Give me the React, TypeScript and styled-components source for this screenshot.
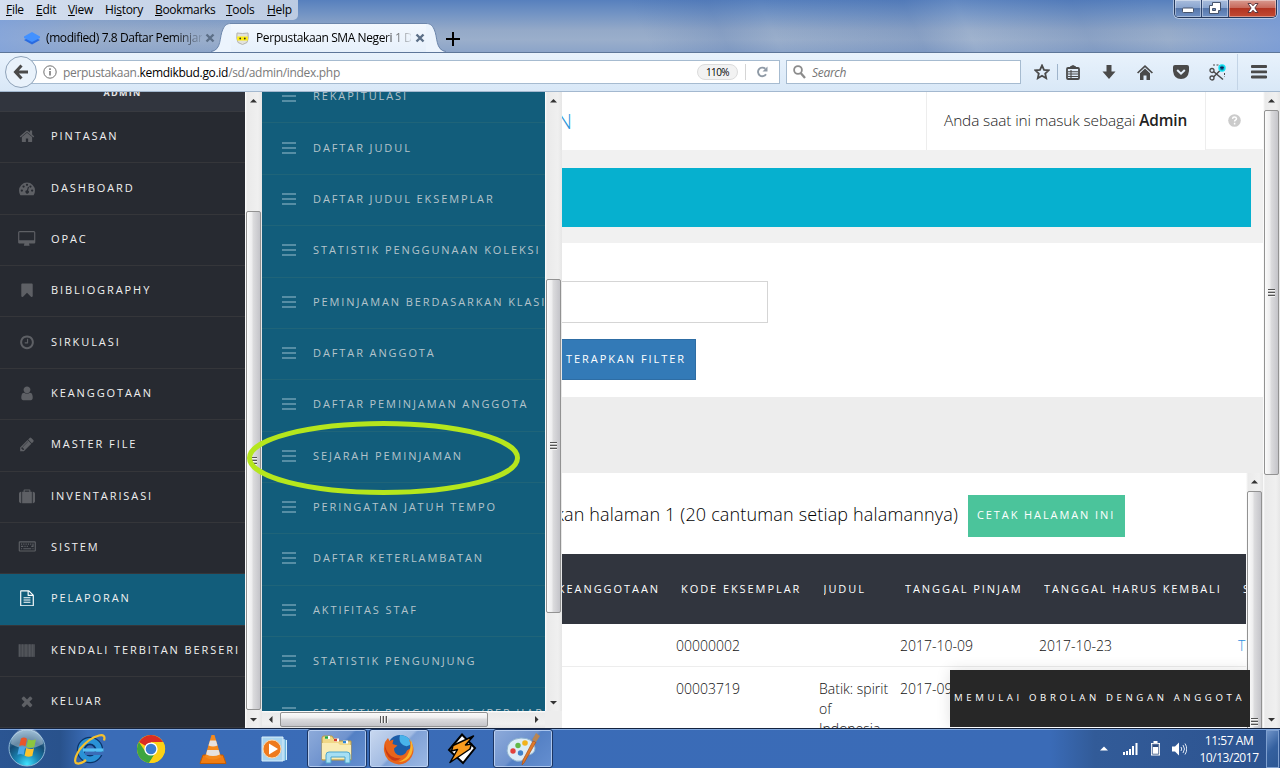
import React from "react";
import styled, { createGlobalStyle, css } from "styled-components";

const Global = createGlobalStyle`
  *, *::before, *::after { box-sizing: border-box; }
  html, body { margin: 0; padding: 0; }
  body { width: 1280px; height: 768px; overflow: hidden; font-family: "Open Sans", "Noto Sans", sans-serif; }
  svg { display: block; flex: none; }
`;

const Screen = styled.div`
  position: relative;
  display: flex;
  flex-direction: column;
  width: 1280px;
  height: 768px;
  overflow: hidden;
  background: #fff;
`;

/* ---------- browser chrome ---------- */

const TitleBar = styled.header`
  display: flex;
  flex-direction: column;
  height: 53px;
  flex: none;
  border-bottom: 1px solid #5d7699;
  background:
    linear-gradient(90deg, rgba(130, 164, 222, 0.75) 0, rgba(150, 172, 206, 0.35) 90px, rgba(255, 255, 255, 0) 240px, rgba(255, 255, 255, 0) 1170px, rgba(120, 155, 216, 0.75) 1280px),
    linear-gradient(65deg, rgba(255, 255, 255, 0) 50%, rgba(50, 90, 160, 0.16) 56%, rgba(255, 255, 255, 0) 60%, rgba(50, 90, 160, 0.16) 71%, rgba(255, 255, 255, 0.06) 75%, rgba(50, 90, 160, 0.14) 84%, rgba(255, 255, 255, 0) 90%),
    linear-gradient(180deg, #5780bd 0, #7394c4 14px, #94a9c8 30px, #9aaecb 40px, #8aa3c8 53px);
`;

const TitleTop = styled.div`
  display: flex;
  justify-content: space-between;
  align-items: flex-start;
  height: 24px;
  padding-right: 3px;
`;

const MenuBar = styled.nav`
  display: flex;
  height: 20px;
  width: 298px;
  padding-left: 6px;
  background: linear-gradient(90deg, #d5dfef, #bccbe2);
  border-bottom-right-radius: 5px;
`;

const MenuItem = styled.span<{ $w: number; $ls?: number }>`
  width: ${(p) => p.$w}px;
  flex: none;
  font-size: 12px;
  line-height: 20px;
  letter-spacing: ${(p) => p.$ls ?? -0.3}px;
  white-space: nowrap;
  color: #000;
  u { text-underline-offset: 1px; }
`;

const WindowButtons = styled.div`
  display: flex;
  width: 103px;
  height: 18px;
  border: 1px solid #24385c;
  border-top: 0;
  border-radius: 0 0 5px 5px;
  overflow: hidden;
  box-shadow: 0 0 0 1px rgba(255, 255, 255, 0.45);
`;

const WindowButton = styled.span<{ $w: number; $close?: boolean }>`
  display: flex;
  justify-content: center;
  align-items: center;
  width: ${(p) => p.$w}px;
  height: 17px;
  padding-bottom: 1px;
  box-shadow: inset 0 0 0 1px rgba(255, 255, 255, 0.4);
  border-right: ${(p) => (p.$close ? 0 : 1)}px solid #2d446e;
  background: ${(p) =>
    p.$close
      ? "linear-gradient(180deg, #d99a90 0, #c86a5c 45%, #b13321 46%, #c24a33 100%)"
      : "linear-gradient(180deg, #a9bddd 0, #8aa5cf 45%, #5474a8 46%, #6f90c4 100%)"};
`;

const TabStrip = styled.div`
  display: flex;
  height: 29px;
  align-items: stretch;
`;

const InactiveTab = styled.div`
  display: flex;
  align-items: center;
  width: 211px;
  flex: none;
  padding: 1px 0 0 24px;
`;

const ActiveTab = styled.div`
  display: flex;
  align-items: center;
  width: 195px;
  padding-left: 5px;
  border-top: 1px solid #6d87ac;
  background: linear-gradient(180deg, #f3f8fe, #e6f0fb);
`;

const TabTitle = styled.span<{ $w: number; $ls: number }>`
  width: ${(p) => p.$w}px;
  flex: none;
  overflow: hidden;
  white-space: nowrap;
  font-size: 12px;
  line-height: 18px;
  letter-spacing: ${(p) => p.$ls}px;
  color: #000;
  mask-image: linear-gradient(90deg, #000 82%, transparent 102%);
`;

const Gap = styled.i<{ $w: number }>`
  width: ${(p) => p.$w}px;
  flex: none;
`;

const NavBar = styled.div`
  display: flex;
  align-items: center;
  height: 39px;
  flex: none;
  padding-left: 5px;
  background: linear-gradient(180deg, #e8f2fc, #d9e8f7);
  border-bottom: 1px solid #a3b8cf;
`;

const BackButton = styled.span`
  position: relative;
  display: flex;
  align-items: center;
  justify-content: center;
  width: 32px;
  height: 32px;
  flex: none;
  margin-right: -6px;
  border: 1px solid #8fa3b9;
  border-radius: 50%;
  background: #e9f2fb;
`;

const Field = styled.div<{ $w: number; $pad: number }>`
  display: flex;
  align-items: center;
  width: ${(p) => p.$w}px;
  height: 24px;
  flex: none;
  padding-left: ${(p) => p.$pad}px;
  border: 1px solid #a6bbd0;
  background: #fff;
`;

const Url = styled.span`
  flex: 1;
  margin-left: 6px;
  padding-top: 1px;
  font-size: 12px;
  line-height: 20px;
  letter-spacing: -0.31px;
  color: #7a7a7a;
  b { font-weight: 400; color: #000; }
`;

const ZoomBadge = styled.span`
  width: 41px;
  height: 16px;
  border: 1px solid #dcdcdc;
  border-radius: 8px;
  background: #f2f2f2;
  font-size: 10px;
  line-height: 14px;
  letter-spacing: -0.6px;
  text-align: center;
  color: #000;
`;

const Divider = styled.i<{ $h: number; $c: string }>`
  width: 1px;
  height: ${(p) => p.$h}px;
  flex: none;
  background: ${(p) => p.$c};
`;

const SearchHint = styled.span`
  margin-left: 6px;
  padding-top: 1px;
  font-size: 12px;
  line-height: 20px;
  font-style: italic;
  letter-spacing: -0.3px;
  color: #757575;
`;

const ToolButton = styled.span<{ $w: number }>`
  display: flex;
  justify-content: center;
  width: ${(p) => p.$w}px;
  flex: none;
`;

/* ---------- scrollbars ---------- */

const Bar = styled.div<{ $v: boolean }>`
  display: flex;
  flex: none;
  overflow: hidden;
  ${(p) =>
    p.$v
      ? css`
          flex-direction: column;
          width: 17px;
          height: 100%;
          background: linear-gradient(90deg, #fff 0, #eaeaea 2px, #f0f0f0 13px, #e6e6e6 17px);
        `
      : css`
          height: 17px;
          background: linear-gradient(180deg, #fff 0, #eaeaea 2px, #f0f0f0 13px, #e6e6e6 17px);
        `}
`;

const ArrowCell = styled.span`
  display: flex;
  align-items: center;
  justify-content: center;
  width: 17px;
  height: 17px;
  flex: none;
`;

const Space = styled.i<{ $n: number; $v: boolean }>`
  flex: none;
  ${(p) => (p.$v ? `height: ${p.$n}px;` : `width: ${p.$n}px;`)}
`;

const Thumb = styled.div<{ $n: number; $v: boolean }>`
  display: flex;
  align-items: center;
  justify-content: center;
  flex: none;
  border: 1px solid #929292;
  border-radius: 2px;
  ${(p) =>
    p.$v
      ? css`
          width: 15px;
          margin-left: 1px;
          height: ${p.$n}px;
          background: linear-gradient(90deg, #fbfbfb 0, #ededee 5px, #dcdcde 6px, #c4c4c9 13px, #dedee0 14px);
        `
      : css`
          height: 15px;
          margin-top: 1px;
          width: ${p.$n}px;
          background: linear-gradient(180deg, #fbfbfb 0, #ededee 5px, #dcdcde 6px, #c4c4c9 13px, #dedee0 14px);
        `}
`;

const Grip = styled.i<{ $v: boolean }>`
  ${(p) =>
    p.$v
      ? css`
          width: 7px;
          height: 8px;
          background: repeating-linear-gradient(180deg, #555 0 1px, #f4f4f4 1px 2px, #bbb 2px 3px);
        `
      : css`
          width: 8px;
          height: 7px;
          background: repeating-linear-gradient(90deg, #555 0 1px, #f4f4f4 1px 2px, #bbb 2px 3px);
        `}
`;

const arrows: Record<string, string> = {
  up: "M0 5.5 3.5 2 7 5.5z",
  down: "M0 2 3.5 5.5 7 2z",
  left: "M5.5 0 2 3.5 5.5 7z",
  right: "M2 0 5.5 3.5 2 7z",
};

function Arrow({ dir }: { dir: string }) {
  return (
    <ArrowCell>
      <svg width="7" height="7" viewBox="0 0 7 7">
        <path d={arrows[dir]} fill="#333" />
      </svg>
    </ArrowCell>
  );
}

function Scroll({ v = true, before, size, after }: { v?: boolean; before: number; size: number; after: number }) {
  return (
    <Bar $v={v}>
      <Arrow dir={v ? "up" : "left"} />
      <Space $n={before} $v={v} />
      <Thumb $n={size} $v={v}>
        <Grip $v={v} />
      </Thumb>
      <Space $n={after} $v={v} />
      <Arrow dir={v ? "down" : "right"} />
    </Bar>
  );
}

/* ---------- page: navigation ---------- */

const Page = styled.div`
  display: flex;
  height: 636px;
  flex: none;
  overflow: hidden;
`;

const Sidebar = styled.nav`
  width: 245px;
  flex: none;
  overflow: hidden;
  background: #272a31;
`;

const Profile = styled.div`
  display: flex;
  justify-content: center;
  align-items: flex-end;
  height: 20.06px;
  padding-bottom: 12px;
  background: #31353e;
  border-bottom: 1px solid #383a40;
  font-size: 9px;
  line-height: 12px;
  font-weight: 700;
  letter-spacing: 1.3px;
  color: #e6e6e6;
`;

const NavRow = styled.a<{ $active?: boolean }>`
  display: flex;
  align-items: center;
  height: 51.36px;
  padding: 0 0 2px 18px;
  border-bottom: 1px solid #35363a;
  background: ${(p) => (p.$active ? "#125d7b" : "transparent")};
  color: ${(p) => (p.$active ? "#fff" : "#5e6065")};
`;

const NavLabel = styled.span<{ $dim?: boolean }>`
  margin-left: ${(p) => (p.$dim ? 17 : 15)}px;
  font-size: 11px;
  line-height: 16px;
  letter-spacing: ${(p) => (p.$dim ? 1.9 : 1.91)}px;
  white-space: nowrap;
  color: ${(p) => (p.$dim ? "#b4c4cb" : "#f0f0f0")};
`;

const SubPanel = styled.section`
  display: flex;
  flex-direction: column;
  width: 300px;
  flex: none;
`;

const SubTop = styled.div`
  display: flex;
  height: 619px;
`;

const SubBottom = styled.div`
  display: flex;
  height: 17px;
  background: #ededed;
`;

const SubList = styled.nav`
  display: flex;
  flex-direction: column;
  width: 283px;
  overflow: hidden;
  background: #125d7b;
`;

const SubShift = styled.div`
  margin-top: -19.93px;
`;

const SubRow = styled.a`
  display: flex;
  align-items: center;
  height: 51.36px;
  padding: 0 0 2px 20px;
  border-bottom: 1px solid #1f6479;
  color: #568ea5;
`;

/* ---------- page: main ---------- */

const Main = styled.main`
  width: 701px;
  flex: none;
  background: #f1f1f1;
`;

const TopBar = styled.div`
  display: flex;
  height: 58px;
`;

const PageTitle = styled.div`
  display: flex;
  justify-content: flex-end;
  width: 10px;
  overflow: hidden;
  background: #fff;
  font-size: 20px;
  font-weight: 300;
  line-height: 59px;
  color: #2795d9;
`;

const TopFill = styled.div`
  width: 354px;
  background: #fff;
`;

const SignedIn = styled.div`
  width: 280px;
  padding-left: 17px;
  border-left: 1px solid #ededed;
  border-right: 1px solid #ededed;
  background: #fff;
  font-size: 15.4px;
  line-height: 57px;
  font-weight: 300;
  letter-spacing: -0.11px;
  white-space: nowrap;
  color: #222;
  b { font-weight: 600; }
`;

const Help = styled.div`
  display: flex;
  flex: 1;
  align-items: center;
  justify-content: center;
  height: 57px;
  background: #fff;
`;

const Banner = styled.div`
  height: 59px;
  margin: 18px 12px 16px 0;
  background: #06b0cf;
`;

const FilterBox = styled.div`
  height: 154px;
  padding-top: 38px;
  background: #fff;
`;

const TextInput = styled.div`
  width: 206px;
  height: 42px;
  border: 1px solid #d5d5d5;
  border-left: 0;
`;

const ApplyButton = styled.div`
  width: 134px;
  height: 41px;
  margin-top: 16px;
  padding-left: 4px;
  border: 1px solid #2e6da4;
  border-left: 0;
  background: #337ab7;
  font-size: 11px;
  line-height: 38px;
  letter-spacing: 1.95px;
  white-space: nowrap;
  color: #fff;
`;

const ReportArea = styled.div`
  display: flex;
  height: 331px;
  padding-top: 76px;
  background: #ededed;
`;

const Report = styled.div`
  width: 684px;
  background: #fff;
  overflow: hidden;
`;

const Summary = styled.div`
  display: flex;
  align-items: flex-start;
  height: 81px;
  padding-top: 22px;
`;

const SummaryText = styled.span`
  display: flex;
  justify-content: flex-end;
  width: 396px;
  margin: 6px 10px 0 0;
  overflow: hidden;
  white-space: nowrap;
  font-size: 18px;
  font-weight: 300;
  line-height: 26px;
  letter-spacing: 0.16px;
  color: #000;
`;

const PrintButton = styled.span`
  width: 157px;
  height: 42px;
  padding-left: 9px;
  background: #4bc49b;
  font-size: 11px;
  line-height: 40px;
  letter-spacing: 1.9px;
  white-space: nowrap;
  color: #fff;
`;

const TableRow = styled.div<{ $h: number }>`
  display: grid;
  grid-template-columns: 114px 143px 81px 139px 199px 8px;
  height: ${(p) => p.$h}px;
  overflow: hidden;
  padding-top: 12px;
  border-bottom: 1px solid #ededed;
  font-size: 14px;
  line-height: 20px;
  font-weight: 300;
  color: #111;
  a { color: #2a8fe0; }
`;

const TitleCell = styled.span`
  width: 72px;
`;

const TableHead = styled(TableRow)`
  padding: 0 0 0 5px;
  grid-template-columns: 114px 142.5px 81.5px 139px 199px 3px;
  border: 0;
  background: #31353e;
  font-size: 11px;
  line-height: 69px;
  font-weight: 400;
  letter-spacing: 1.93px;
  color: #fff;
  span { white-space: nowrap; overflow: hidden; }
`;

const ClippedHead = styled.span`
  display: flex;
  justify-content: flex-end;
  width: 104px;
  margin-left: -5px;
  padding-right: 6px;
`;

const Chat = styled.div`
  position: absolute;
  left: 950px;
  top: 670px;
  width: 300px;
  height: 57px;
  padding-left: 4px;
  background: #272727;
  box-shadow: 0 0 14px rgba(0, 0, 0, 0.12);
  clip-path: inset(-20px 0 0 -20px);
  font-size: 9.6px;
  line-height: 55px;
  letter-spacing: 3.64px;
  white-space: nowrap;
  color: #fff;
`;

const Mark = styled.svg`
  position: absolute;
  left: 244px;
  top: 418px;
`;

/* ---------- taskbar ---------- */

const Taskbar = styled.footer`
  display: flex;
  height: 40px;
  flex: none;
  border-top: 1px solid #14233f;
  background: linear-gradient(90deg, #2b5592 0, #29528c 60px, #3a6cb7 88px, #3a6bb7 1050px, #325b98 1095px, #2c5390 1280px);
  box-shadow: inset 0 1px 0 #7fa7df;
`;

const TaskItem = styled.span<{ $w: number; $open?: boolean; $front?: boolean }>`
  display: flex;
  align-items: center;
  justify-content: center;
  width: ${(p) => p.$w}px;
  height: 39px;
  flex: none;
  ${(p) =>
    p.$open &&
    css`
      border: 1px solid #1b3563;
      border-radius: 3px;
      box-shadow: inset 0 0 0 1px rgba(200, 220, 250, 0.75);
      background: ${p.$front
        ? "linear-gradient(135deg, #c9d8ef 0, #a3bce3 48%, #7fa1d6 52%, #9cb8e4 100%)"
        : "linear-gradient(135deg, #8eabda 0, #6f93ce 48%, #5480c4 52%, #658fd0 100%)"};
    `}
`;

const Tray = styled.div`
  display: flex;
  align-items: center;
  margin-left: auto;
`;

const Clock = styled.div`
  width: 72px;
  font-size: 12px;
  line-height: 17px;
  letter-spacing: -0.45px;
  text-align: center;
  white-space: nowrap;
  color: #fff;
`;

const ShowDesktop = styled.i`
  width: 13px;
  height: 38px;
  margin: 1px 1px 0 1px;
  border: 1px solid #7fa0d0;
  background: linear-gradient(135deg, #6f93c8, #34609f 50%, #2d5894);
`;

/* ---------- icons ---------- */

function NavIcon({ kind }: { kind: string }) {
  const art: Record<string, React.ReactNode> = {
    home: <path d="M1472 992v480q0 26-19 45t-45 19h-384v-384h-256v384h-384q-26 0-45-19t-19-45v-480q0-1 .5-3t.5-3l575-474 575 474q1 2 1 6zm223-69l-62 74q-8 9-21 11h-3q-13 0-21-7l-692-577-692 577q-12 8-24 7-13-2-21-11l-62-74q-8-10-7-23.5t11-21.5l719-599q32-26 76-26t76 26l244 204v-195q0-14 9-23t23-9h192q14 0 23 9t9 23v408l219 182q10 8 11 21.5t-7 23.5z" />,
    gauge: (
      <path
        fillRule="evenodd"
        d="M896 256a896 896 0 0 1 896 896q0 260-140 483-20 29-54 29H194q-34 0-54-29Q0 1412 0 1152A896 896 0 0 1 896 256zM320 1024a128 128 0 1 0 0 256 128 128 0 0 0 0-256zm192-448a128 128 0 1 0 0 256 128 128 0 0 0 0-256zm384-192a128 128 0 1 0 0 256 128 128 0 0 0 0-256zm384 192a128 128 0 1 0 0 256 128 128 0 0 0 0-256zm192 448a128 128 0 1 0 0 256 128 128 0 0 0 0-256zM1000 720l-110 390a192 192 0 1 0 130 30l100-390z"
      />
    ),
    desktop: <path d="M1728 992v-832q0-13-9.5-22.5t-22.5-9.5h-1600q-13 0-22.5 9.5t-9.5 22.5v832q0 13 9.5 22.5t22.5 9.5h1600q13 0 22.500-9.500t9.500-22.500zm128-832v1088q0 66-47 113t-113 47h-544q0 37 16 77.500t32 71 16 43.500q0 26-19 45t-45 19h-512q-26 0-45-19t-19-45q0-14 16-44t32-70 16-78h-544q-66 0-113-47t-47-113v-1088q0-66 47-113t113-47h1600q66 0 113 47t47 113z" />,
    bookmark: <path d="M1420 128q23 0 44 9 33 13 52.500 41t19.500 62v1289q0 34-19.500 62t-52.500 41q-19 8-44 8-48 0-83-32l-441-424-441 424q-36 33-83 33-23 0-44-9-33-13-52.500-41t-19.500-62v-1289q0-34 19.500-62t52.500-41q21-9 44-9h1048z" />,
    clock: <path d="M1024 544v448q0 14-9 23t-23 9h-320q-14 0-23-9t-9-23v-64q0-14 9-23t23-9h224v-352q0-14 9-23t23-9h64q14 0 23 9t9 23zm416 352q0-148-73-273t-198-198-273-73-273 73-198 198-73 273 73 273 198 198 273 73 273-73 198-198 73-273zm224 0q0 209-103 385.500t-279.500 279.500-385.500 103-385.500-103-279.500-279.500-103-385.500 103-385.500 279.500-279.500 385.500-103 385.500 103 279.500 279.500 103 385.500z" />,
    user: <path d="M1536 1399q0 109-62.500 187t-150.500 78h-854q-88 0-150.500-78t-62.500-187q0-85 8.500-160.500t31.500-152 58.500-131 94-89 134.500-34.500q131 128 313 128t313-128q76 0 134.500 34.500t94 89 58.500 131 31.500 152 8.500 160.500zm-256-887q0 159-112.500 271.500t-271.500 112.500-271.500-112.500-112.500-271.500 112.500-271.500 271.500-112.500 271.500 112.500 112.500 271.500z" />,
    pencil: <path d="M491 1536l91-91-235-235-91 91v107h128v128h107zm523-928q0-22-22-22-10 0-17 7l-542 542q-7 7-7 17 0 22 22 22 10 0 17-7l542-542q7-7 7-17zm-54-192l416 416-832 832h-416v-416zm683 96q0 53-37 90l-166 166-416-416 166-165q36-38 90-38 53 0 91 38l235 234q37 39 37 91z" />,
    suitcase: (
      <path
        fillRule="evenodd"
        d="M0 608q0-92 66-158t158-66h32v1280h-32q-92 0-158-66T0 1440zM352 384h160V224q0-96 96-96h576q96 0 96 96v160h160v1280H352zM640 256v128h512V256zM1536 384h32q92 0 158 66t66 158v832q0 92-66 158t-158 66h-32z"
      />
    ),
    keyboard: (
      <path
        fillRule="evenodd"
        d="M0 384q0-128 128-128h1664q128 0 128 128v896q0 128-128 128H128q-128 0-128-128zm128 0v896h1664V384zM256 512h128v128H256zm256 0h128v128H512zm256 0h128v128H768zm256 0h128v128h-128zm256 0h128v128h-128zm256 0h128v384h-256V768h128zM256 768h256v128H256zm384 0h128v128H640zm256 0h128v128H896zM256 1024h128v128H256zm256 0h896v128H512zm1024 0h128v128h-128z"
      />
    ),
    file: (
      <path
        fillRule="evenodd"
        d="M128 96q0-96 96-96h900l540 540v1156q0 96-96 96H224q-96 0-96-96zM256 128v1536h1280V640h-480q-96 0-96-96V128zM1088 136v376h376zM512 768h768v128H512zm0 256h768v128H512zm0 256h768v128H512z"
      />
    ),
    barcode: (
      <g>
        <path d="M-64 224H1792v1408H-64z" opacity="0.6" />
        <path d="M0 224h128v1408H0zM352 224h96v1408h-96zM704 224h160v1408H704zM1120 224h160v1408h-160zM1472 224h128v1408h-128z" opacity="0.6" />
      </g>
    ),
    times: <path d="M1490 1322q0 40-28 68l-136 136q-28 28-68 28t-68-28l-294-294-294 294q-28 28-68 28t-68-28l-136-136q-28-28-28-68t28-68l294-294-294-294q-28-28-28-68t28-68l136-136q28-28 68-28t68 28l294 294 294-294q28-28 68-28t68 28l136 136q28 28 28 68t-28 68l-294 294 294 294q28 28 28 68z" />,
  };
  const wide = kind === "desktop" || kind === "keyboard";
  return (
    <svg width="18" height="16" viewBox={wide ? "-32 0 1920 1792" : "-64 -32 1920 1792"} fill="currentColor">
      {art[kind]}
    </svg>
  );
}

const Bars = () => (
  <svg width="14" height="12" viewBox="0 0 14 12" shapeRendering="crispEdges">
    <path d="M0 0h14v2H0zM0 5h14v2H0zM0 10h14v2H0z" fill="currentColor" />
  </svg>
);

const TabClose = () => (
  <svg width="10" height="10" viewBox="0 0 10 10">
    <path d="M1.500 1.500l7 7M8.500 1.500l-7 7" stroke="#5c6f87" strokeWidth="2.400" />
  </svg>
);

const ink = "#4a4a4a";

const nav: [string, string][] = [
  ["home", "PINTASAN"],
  ["gauge", "DASHBOARD"],
  ["desktop", "OPAC"],
  ["bookmark", "BIBLIOGRAPHY"],
  ["clock", "SIRKULASI"],
  ["user", "KEANGGOTAAN"],
  ["pencil", "MASTER FILE"],
  ["suitcase", "INVENTARISASI"],
  ["keyboard", "SISTEM"],
  ["file", "PELAPORAN"],
  ["barcode", "KENDALI TERBITAN BERSERI"],
  ["times", "KELUAR"],
];

const reports = [
  "REKAPITULASI",
  "DAFTAR JUDUL",
  "DAFTAR JUDUL EKSEMPLAR",
  "STATISTIK PENGGUNAAN KOLEKSI",
  "PEMINJAMAN BERDASARKAN KLASIFIKASI",
  "DAFTAR ANGGOTA",
  "DAFTAR PEMINJAMAN ANGGOTA",
  "SEJARAH PEMINJAMAN",
  "PERINGATAN JATUH TEMPO",
  "DAFTAR KETERLAMBATAN",
  "AKTIFITAS STAF",
  "STATISTIK PENGUNJUNG",
  "STATISTIK PENGUNJUNG (PER HARI)",
];

function Chrome() {
  return (
    <>
      <TitleBar>
        <TitleTop>
          <MenuBar>
            <MenuItem $w={30}><u>F</u>ile</MenuItem>
            <MenuItem $w={32}><u>E</u>dit</MenuItem>
            <MenuItem $w={37}><u>V</u>iew</MenuItem>
            <MenuItem $w={50}>Hi<u>s</u>tory</MenuItem>
            <MenuItem $w={71}><u>B</u>ookmarks</MenuItem>
            <MenuItem $w={41}><u>T</u>ools</MenuItem>
            <MenuItem $w={30}><u>H</u>elp</MenuItem>
          </MenuBar>
          <WindowButtons>
            <WindowButton $w={27}>
              <svg width="12" height="14" viewBox="0 0 12 14"><rect x=".5" y="7" width="11" height="4.500" rx="1" fill="#fff" stroke="#46536b" /></svg>
            </WindowButton>
            <WindowButton $w={27}>
              <svg width="12" height="12" viewBox="0 0 12 12">
                <path d="M3.500.500h8v8h-2v3h-9v-8h3z" fill="#fff" stroke="#46536b" />
                <path d="M3.500 6.500h3v2h-3z" fill="#6f8fc0" stroke="#46536b" />
              </svg>
            </WindowButton>
            <WindowButton $w={47} $close>
              <svg width="12" height="10" viewBox="0 0 12 10"><path d="M1 .500h3l2 2.300 2-2.300h3L7.900 5 11 9.500H8L6 7.200 4 9.500H1L4.100 5z" fill="#fff" stroke="#50303a" strokeWidth=".9" /></svg>
            </WindowButton>
          </WindowButtons>
        </TitleTop>
        <TabStrip>
          <InactiveTab>
            <svg width="16" height="14" viewBox="0 0 16 14"><path d="M0 9l8-4 8 4-8 4.500z" fill="#2a6be0" /><path d="M0 5.500 8 1l8 4.500v1.500l-8 4-8-4z" fill="#4291ff" /></svg>
            <Gap $w={6} />
            <TabTitle $w={156} $ls={-0.4}>(modified) 7.8 Daftar Peminjaman</TabTitle>
            <Gap $w={3} />
            <TabClose />
          </InactiveTab>
          <svg width="20" height="29" viewBox="0 0 20 29">
            <path d="M0 29C11 27 8 14 12 6 14 2 16 .500 20 .500V29z" fill="#ecf4fd" />
            <path d="M0 28.500C11 27 8 14 12 6 14 2 16 .500 20 .500" fill="none" stroke="#6d87ac" />
          </svg>
          <ActiveTab>
            <svg width="13" height="13" viewBox="0 0 13 13">
              <path d="M1 1q5.500 1 11 0 1 6-1 9.500L6.500 12.500 2 10.500Q0 7 1 1z" fill="#e2e2dc" stroke="#b4b4ae" />
              <path d="M1.200 4.500h10.600v4H1.200z" fill="#ffee10" /><circle cx="4.200" cy="6.500" r=".9" fill="#333" /><circle cx="8.800" cy="6.500" r=".9" fill="#333" />
            </svg>
            <Gap $w={7} />
            <TabTitle $w={155} $ls={-0.4}>Perpustakaan SMA Negeri 1 Depok</TabTitle>
            <Gap $w={4} />
            <TabClose />
          </ActiveTab>
          <svg width="20" height="29" viewBox="0 0 20 29">
            <path d="M20 29C9 27 12 14 8 6 6 2 4 .500 0 .500V29z" fill="#ecf4fd" />
            <path d="M20 28.500C9 27 12 14 8 6 6 2 4 .500 0 .500" fill="none" stroke="#6d87ac" />
          </svg>
          <svg width="14" height="29" viewBox="0 0 14 29"><path d="M7 9v14M0 16h14" stroke="#000" strokeWidth="2" /></svg>
        </TabStrip>
      </TitleBar>
      <NavBar>
        <BackButton>
          <svg width="16" height="16" viewBox="0 0 16 16"><path d="M8.500 1.500 2.500 8l6 6.500M3 8h12" fill="none" stroke={ink} strokeWidth="3" /></svg>
        </BackButton>
        <Field $w={749} $pad={11}>
          <svg width="14" height="14" viewBox="0 0 14 14">
            <circle cx="7" cy="7" r="6.200" fill="none" stroke="#707070" /><path d="M7 6v4.500M7 3.200v1.700" stroke="#707070" strokeWidth="1.500" />
          </svg>
          <Url>perpustakaan.<b>kemdikbud.go.id</b>/sd/admin/index.php</Url>
          <ZoomBadge>110%</ZoomBadge>
          <Gap $w={7} />
          <Divider $h={16} $c="#d5d5d5" />
          <Gap $w={10} />
          <svg width="12" height="12" viewBox="0 0 12 12">
            <path d="M9.300 2.800A4.300 4.300 0 1 0 10 8.200" fill="none" stroke="#8f9aa6" strokeWidth="1.900" /><path d="M11.500.500v5h-5z" fill="#8f9aa6" />
          </svg>
          <Gap $w={11} />
        </Field>
        <Gap $w={6} />
        <Field $w={235} $pad={6}>
          <svg width="13" height="14" viewBox="0 0 13 14"><circle cx="5" cy="5" r="3.900" fill="none" stroke="#8c8c8c" strokeWidth="1.800" /><path d="M7.700 8l4.300 5" stroke="#8c8c8c" strokeWidth="2.300" /></svg>
          <SearchHint>Search</SearchHint>
        </Field>
        <Gap $w={8} />
        <ToolButton $w={26}>
          <svg width="16" height="16" viewBox="0 0 16 16"><path d="M8 1.500l2 4.300 4.700.500-3.500 3.200 1 4.700L8 11.800l-4.200 2.400 1-4.700L1.300 6.300 6 5.800z" fill="none" stroke={ink} strokeWidth="1.800" /></svg>
        </ToolButton>
        <Gap $w={2} />
        <Divider $h={16} $c="#9fb4cb" />
        <ToolButton $w={30}>
          <svg width="14" height="15" viewBox="0 0 14 15">
            <path d="M2 3h10a1 1 0 0 1 1 1v9a1 1 0 0 1-1 1H2a1 1 0 0 1-1-1V4a1 1 0 0 1 1-1z" fill="none" stroke={ink} strokeWidth="1.800" /><path d="M4 3.500V1.500L7 0l3 1.500v2z" fill={ink} />
            <path d="M2 6.700h10M2 9h10M2 11.500h10M5 5v9" stroke={ink} strokeWidth="1.100" />
          </svg>
        </ToolButton>
        <Gap $w={1} />
        <ToolButton $w={40}>
          <svg width="14" height="14" viewBox="0 0 14 14"><path d="M4.500 0h5v6.500h4L7 14 .500 6.500h4z" fill={ink} /></svg>
        </ToolButton>
        <ToolButton $w={32}>
          <svg width="16" height="15" viewBox="0 0 16 15"><path d="M8 0l8 7.500-1.200 1.100L8 2.300 1.200 8.600 0 7.500z" fill={ink} /><path d="M8 3.500 13 8.200V15H9.500v-4.500h-3V15H3V8.200z" fill={ink} /></svg>
        </ToolButton>
        <ToolButton $w={40}>
          <svg width="16" height="14" viewBox="0 0 16 14"><path d="M2 0h12q2 0 2 2v4q-1 8-8 8T0 6V2Q0 0 2 0z" fill={ink} /><path d="M4.200 5 8 8.700 11.800 5" fill="none" stroke="#e4effa" strokeWidth="2" /></svg>
        </ToolButton>
        <ToolButton $w={32}>
          <svg width="17" height="17" viewBox="0 0 17 17">
            <path d="M4 1h7M15.500 9v4M11 1v1" stroke={ink} strokeDasharray="2 1.500" />
            <path d="M4.500 7.500 14 15.500M4.500 13 12 5.500" fill="none" stroke={ink} strokeWidth="1.500" />
            <circle cx="3" cy="14" r="2" fill="none" stroke={ink} strokeWidth="1.300" /><circle cx="3" cy="6.500" r="2" fill="none" stroke={ink} strokeWidth="1.300" />
            <circle cx="13" cy="4" r="3.700" fill="#13e2f2" /><path d="M13 1.800v4.400M11 3l4 2M15 3l-4 2" stroke="#125" strokeWidth="1.100" />
          </svg>
        </ToolButton>
        <Gap $w={4} />
        <Divider $h={36} $c="#c3d4e6" />
        <ToolButton $w={41}>
          <svg width="16" height="14" viewBox="0 0 16 14"><path d="M1 1.500h14M1 6.800h14M1 12h14" stroke={ink} strokeWidth="2.800" strokeLinecap="round" /></svg>
        </ToolButton>
      </NavBar>
    </>
  );
}

function StartOrb() {
  return (
    <svg width="38" height="38" viewBox="0 0 38 38">
      <defs>
        <radialGradient id="orb" cx=".5" cy=".95" r=".9">
          <stop offset="0" stopColor="#3fe3ff" /><stop offset=".35" stopColor="#1a87b5" /><stop offset=".7" stopColor="#154a73" /><stop offset="1" stopColor="#5d8fb4" />
        </radialGradient>
      </defs>
      <circle cx="19" cy="19" r="18" fill="url(#orb)" stroke="#8fb9d8" />
      <path d="M3 15A16 16 0 0 1 35 15Q19 24 3 15z" fill="#fff" opacity=".35" />
      <path d="M13 9.500q3-2 6 .3l-1.600 7.500q-3-2-6.200-.2z" fill="#e8562a" />
      <path d="M20 10.300q4 2 8 0L26.300 18q-4 1.600-7.800-.2z" fill="#8cc63f" />
      <path d="M11 18.300q3-1.800 6.200.3L15.600 26q-3-2-6.200-.2z" fill="#4aa8ea" />
      <path d="M18.200 19q4 2 7.800.2L24.300 27q-4 1.800-7.700-.3z" fill="#fcc42c" />
    </svg>
  );
}

function Taskbuttons() {
  return (
    <>
      <Gap $w={8} />
      <StartOrb />
      <Gap $w={12} />
      <TaskItem $w={62}>
        <svg width="34" height="32" viewBox="0 0 34 32">
          <circle cx="18" cy="17" r="9" fill="none" stroke="#0a3469" strokeWidth="8.500" />
          <circle cx="18" cy="17" r="9.200" fill="none" stroke="#2a92d6" strokeWidth="5.500" />
          <path d="M13 18.800h20v3.200H13z" fill="#3a6cb7" />
          <path d="M11 17h20.500" stroke="#58bff2" strokeWidth="3.200" />
          <path d="M32 7.500Q34 1 27 2.500 17 5 8 16 1 27 4 30q4 2 10-3" fill="none" stroke="#f5c02e" strokeWidth="2.300" />
        </svg>
      </TaskItem>
      <Gap $w={1} />
      <TaskItem $w={60}>
        <svg width="30" height="30" viewBox="0 0 30 30">
          <circle cx="15" cy="15" r="14" fill="#fcd116" />
          <path d="M15 15 2.900 8A14 14 0 0 1 27.100 8H15z" fill="#db2d22" />
          <path d="M2.900 8A14 14 0 0 0 13 28.900L20 18l-5-3-6 2z" fill="#3da53f" />
          <path d="M15 8H27.100A14 14 0 0 1 13 28.900L20 18z" fill="#fcd116" />
          <circle cx="15" cy="15" r="6.600" fill="#fff" /><circle cx="15" cy="15" r="5.300" fill="#3b7dd0" />
        </svg>
      </TaskItem>
      <TaskItem $w={64}>
        <svg width="28" height="32" viewBox="0 0 28 32">
          <path d="M4 22h20l3 8.500H1z" fill="#f07d12" stroke="#c55b00" />
          <path d="M12.500 2h3L22 24q-8 5-16 0z" fill="#f58a1c" />
          <path d="M11 7.500h6l1.500 5q-4.500 2-9 0z" fill="#e6e2df" /><path d="M8.300 17h11.400l1.200 4.500q-7 3-13.800 0z" fill="#e6e2df" />
        </svg>
      </TaskItem>
      <TaskItem $w={60}>
        <svg width="28" height="26" viewBox="0 0 28 26">
          <path d="M20 3l6 1v20l-6 1z" fill="#6db4dc" /><path d="M23 3v22M25.500 4v20" stroke="#d4efff" />
          <path d="M1 1h21v24H1z" fill="#a8d4ef" stroke="#d9effb" />
          <circle cx="11" cy="13" r="9" fill="#ee7a1d" stroke="#ffd7a8" /><path d="M8 7.500l9 5.500-9 5.500z" fill="#fff" />
        </svg>
      </TaskItem>
      <Gap $w={2} />
      <TaskItem $w={60} $open>
        <svg width="34" height="30" viewBox="0 0 34 30">
          <path d="M2 4q0-2 2-2h8l2 3h4l1 2h12v19H2z" fill="#f0d887" stroke="#b89a48" />
          <path d="M5 3.500h5M14 6h5M23 8h5" stroke="#fff" strokeWidth="3" /><path d="M5 3.500h3" stroke="#25a53c" strokeWidth="2.500" /><path d="M14 6h3" stroke="#d43a2a" strokeWidth="2.500" /><path d="M23 8h3" stroke="#2f86d8" strokeWidth="2.500" />
          <path d="M2 9h16l2 2h11v14H2z" fill="#f9ecb5" />
          <path d="M6 29v-8q0-3 3-3h18q3 0 3 3v8h-5v-6H11v6z" fill="#a6dff4" stroke="#4da5cc" />
        </svg>
      </TaskItem>
      <Gap $w={2} />
      <TaskItem $w={60} $open $front>
        <svg width="32" height="32" viewBox="0 0 32 32">
          <circle cx="17" cy="14.500" r="12.500" fill="#1c5da8" /><path d="M17 2q8 0 12 8-4 5-9 2t-3-10z" fill="#49b3ea" />
          <path d="M2 9l3-4 1.500 3 4-1.500-1 4.500 5 1.500-3.500 3q0 6 6 7 5 0 7-5l3-2q1-5-1-9 6 6 4 14-3 10-14 11Q3 30 1 18q-.5-5 1-9z" fill="#e8641b" />
          <path d="M27.500 6q4 8 1 15-4 8-13 8 8-3 10-9 3-5 2-14z" fill="#fbb52d" />
          <path d="M2 10q0 8 6 13 5 3 10 2-4 4-9 2Q1 22 2 10z" fill="#c93a14" />
        </svg>
      </TaskItem>
      <Gap $w={2} />
      <TaskItem $w={62}>
        <svg width="32" height="32" viewBox="0 0 32 32">
          <path d="M16 1.500 29 15 17 30 3 17z" fill="#fff" stroke="#000" strokeWidth="2" />
          <path d="M27.500 3 7 12.500 5.500 18l6-1.500L4 29.500l20-13.500 1.500-5-6 1z" fill="#f99b1f" stroke="#000" strokeWidth="1.500" strokeLinejoin="round" />
        </svg>
      </TaskItem>
      <TaskItem $w={60} $open>
        <svg width="34" height="32" viewBox="0 0 34 32">
          <path d="M15 5q13 0 14 10 0 6-7 7-4 1-4 4-2 3-8 2-8-3-9-10Q1 6 15 5z" fill="#dcecf7" stroke="#8fb3cf" />
          <circle cx="7" cy="18" r="2.700" fill="#e2423d" /><circle cx="12" cy="12.500" r="2.700" fill="#63b848" /><circle cx="19" cy="10" r="2.800" fill="#f2b21d" /><circle cx="14.500" cy="20" r="2.700" fill="#4282c9" />
          <path d="M27 8l3 1-12 21-2 2 1-5z" fill="#e0792a" stroke="#a9511a" strokeWidth=".7" /><path d="M26 7l4-7 4 3-4 6z" fill="#b98552" />
        </svg>
      </TaskItem>
      <Tray>
        <svg width="8" height="5" viewBox="0 0 8 5"><path d="M0 4.500 4 .500l4 4z" fill="#fff" /></svg>
        <Gap $w={15} />
        <svg width="15" height="12" viewBox="0 0 15 12"><path d="M0 9h2v3H0zM3 8h2v4H3zM6 6h2v6H6zM9 3h2v9H9zM12.500 0h2v12h-2z" fill="#fff" /></svg>
        <Gap $w={12} />
        <svg width="11" height="15" viewBox="0 0 11 15"><path d="M3.500 0h4v2h2.500v12.500H1V2h2.500z" fill="#fff" /><path d="M2.700 3.500h5.600v2.500H2.700z" fill="#2c4c80" /><path d="M2.300 3.300h6.400v9.900H2.300z" fill="none" stroke="#2c4c80" strokeWidth=".8" /></svg>
        <Gap $w={11} />
        <svg width="15" height="14" viewBox="0 0 15 14"><path d="M0 4.500h3L7 .500v13l-4-4H0z" fill="#fff" /><path d="M9 5q1.500 2 0 4M11 3q3 4 0 8M13 1.500q3.500 5.500 0 11" fill="none" stroke="#dfe8f5" /></svg>
        <Gap $w={6} />
        <Clock>11:57 AM<br />10/13/2017</Clock>
        <ShowDesktop />
      </Tray>
    </>
  );
}

export default function App() {
  return (
    <Screen>
      <Global />
      <Chrome />
      <Page>
        <Sidebar>
          <Profile>ADMIN</Profile>
          {nav.map(([icon, label]) => (
            <NavRow key={label} $active={icon === "file"}>
              <NavIcon kind={icon} />
              <NavLabel>{label}</NavLabel>
            </NavRow>
          ))}
        </Sidebar>
        <Scroll before={102} size={499} after={1} />
        <SubPanel>
          <SubTop>
            <SubList>
              <SubShift>
                {reports.map((label) => (
                  <SubRow key={label}>
                    <Bars />
                    <NavLabel $dim>{label}</NavLabel>
                  </SubRow>
                ))}
              </SubShift>
            </SubList>
            <Scroll before={170} size={334} after={81} />
          </SubTop>
          <SubBottom>
            <Scroll v={false} before={1} size={208} after={40} />
          </SubBottom>
        </SubPanel>
        <Main>
          <TopBar>
            <PageTitle>PELAPORAN</PageTitle>
            <TopFill />
            <SignedIn>Anda saat ini masuk sebagai <b>Admin</b></SignedIn>
            <Help>
              <svg width="13" height="13" viewBox="0 0 13 13">
                <circle cx="6.500" cy="6.500" r="6.300" fill="#cbcbcb" />
                <path d="M4.500 4.800q.2-1.800 2-1.800t2 1.600q0 1-1 1.500-.9.500-.9 1.400M6.600 8.700v1.700" fill="none" stroke="#fff" strokeWidth="1.500" />
              </svg>
            </Help>
          </TopBar>
          <Banner />
          <FilterBox>
            <TextInput />
            <ApplyButton>TERAPKAN FILTER</ApplyButton>
          </FilterBox>
          <ReportArea>
            <Report>
              <Summary>
                <SummaryText>cantuman ditemukan. Menampilkan halaman 1 (20 cantuman setiap halamannya)</SummaryText>
                <PrintButton>CETAK HALAMAN INI</PrintButton>
              </Summary>
              <TableHead $h={70}>
                <ClippedHead>ID KEANGGOTAAN</ClippedHead>
                <span>KODE EKSEMPLAR</span>
                <span>JUDUL</span>
                <span>TANGGAL PINJAM</span>
                <span>TANGGAL HARUS KEMBALI</span>
                <span>STATUS</span>
              </TableHead>
              <TableRow $h={43}>
                <span />
                <span>00000002</span>
                <span />
                <span>2017-10-09</span>
                <span>2017-10-23</span>
                <a>Tidak</a>
              </TableRow>
              <TableRow $h={80}>
                <span />
                <span>00003719</span>
                <TitleCell>Batik: spirit of Indonesia</TitleCell>
                <span>2017-09-28</span>
                <span />
                <span />
              </TableRow>
            </Report>
            <Scroll before={1} size={462} after={0} />
          </ReportArea>
        </Main>
        <Scroll before={1} size={365} after={236} />
      </Page>
      <Taskbar>
        <Taskbuttons />
      </Taskbar>
      <Chat>MEMULAI OBROLAN DENGAN ANGGOTA</Chat>
      <Mark width="280" height="80" viewBox="0 0 280 80">
        <ellipse cx="139.500" cy="40" rx="134" ry="34.500" fill="none" stroke="#b5e61d" strokeWidth="5" />
      </Mark>
    </Screen>
  );
}
